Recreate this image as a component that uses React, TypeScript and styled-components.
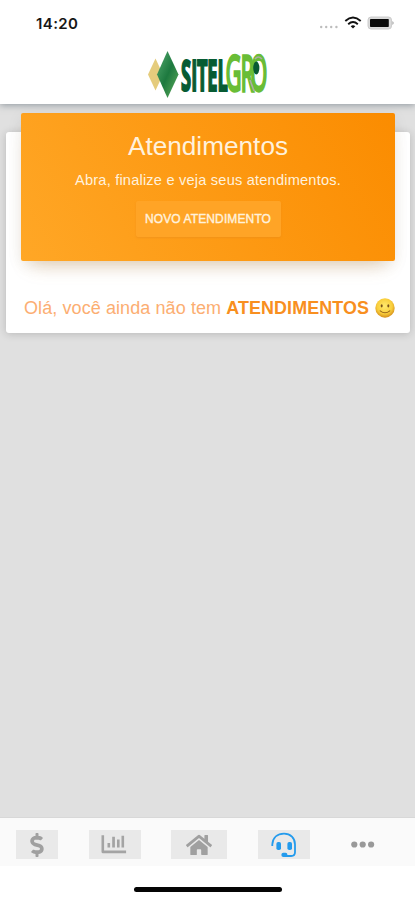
import React from "react";
import styled, { createGlobalStyle } from "styled-components";
import { FaDollarSign, FaHome } from "react-icons/fa";

const GlobalStyle = createGlobalStyle`
  * { box-sizing: border-box; }
  html, body { margin: 0; padding: 0; background: #fff; }
  body { font-family: "Liberation Sans", Arial, sans-serif; overflow: hidden; }
  svg { display: block; overflow: visible; flex: none; }
`;

const Screen = styled.div`
  width: 415px;
  height: 900px;
  display: flex;
  flex-direction: column;
  background: #fff;
`;

const Header = styled.header`
  height: 104px;
  flex: none;
  background: #fff;
  box-shadow: 0 1px 7px rgba(60, 75, 90, 0.5);
  position: relative;
  z-index: 1;
`;

const StatusBar = styled.div`
  height: 46px;
  padding: 0 21px 0 36px;
  display: flex;
  justify-content: space-between;
  align-items: center;
`;

const Clock = styled.span`
  font: 600 15px/18px Inter, sans-serif;
  letter-spacing: 0.4px;
  padding-top: 1px;
  color: #171717;
`;

const StatusIcons = styled.div`
  display: flex;
  align-items: center;
`;

const LogoRow = styled.div`
  display: flex;
  padding: 3px 0 0 146px;
`;

const Content = styled.main`
  flex: 1;
  background: #e0e0e0;
  padding: 28px 5px 0 6px;
`;

const Card = styled.section`
  height: 201px;
  padding: 0 15px;
  background: #fff;
  border-radius: 3px;
  box-shadow: 0 1px 8px rgba(0, 0, 0, 0.18);
`;

const Banner = styled.div`
  height: 148px;
  transform: translateY(-19px);
  display: flex;
  flex-direction: column;
  align-items: center;
  border-radius: 2px;
  color: #fff1dc;
  background: linear-gradient(60deg, #ffa726, #fb8c00);
  box-shadow: 0 12px 18px -10px rgba(190, 130, 50, 0.4), 0 4px 16px rgba(0, 0, 0, 0.07);
`;

const Title = styled.h1`
  margin: 19px 0 0;
  font-size: 26.2px;
  font-weight: 400;
  line-height: 29px;
`;

const Subtitle = styled.p`
  margin: 10px 0 0;
  font-size: 14.6px;
  line-height: 18px;
  letter-spacing: 0.2px;
  white-space: nowrap;
`;

const NewButton = styled.button`
  width: 145px;
  height: 36px;
  margin-top: 12px;
  padding: 0;
  border: 0;
  border-radius: 2px;
  background: #ffa426;
  box-shadow: 0 1px 2px rgba(220, 130, 30, 0.35);
  color: #fff1dc;
  font: 400 12px/36px "Liberation Sans", Arial, sans-serif;
  letter-spacing: 0.12px;
  -webkit-text-stroke: 0.4px #fff1dc;
  white-space: nowrap;
`;

const Message = styled.p`
  margin: 16px -8px 0 3px;
  display: flex;
  align-items: center;
  height: 24px;
  font-size: 18px;
  letter-spacing: 0.09px;
  color: #fcae72;
  white-space: nowrap;
`;

const Strong = styled.strong`
  margin: 0 6px 0 5px;
  font-size: 17.9px;
  letter-spacing: 0.12px;
  color: #f88f20;
`;

const TabBar = styled.nav`
  height: 49px;
  flex: none;
  display: flex;
  align-items: center;
  padding: 5px 0 0 16px;
  background: #fafafa;
  border-top: 1px solid #d8d8d8;
`;

const Tab = styled.button<{ $width: number; $gap?: number; $plain?: boolean }>`
  width: ${(p) => p.$width}px;
  height: 29px;
  margin: 0 ${(p) => p.$gap ?? 0}px 0 0;
  padding: 0;
  flex: none;
  display: flex;
  align-items: center;
  justify-content: center;
  border: 0;
  background: ${(p) => (p.$plain ? "transparent" : "#e9e9e9")};
  color: #a0a0a0;
`;

const HomeArea = styled.footer`
  height: 34px;
  flex: none;
  display: flex;
  justify-content: center;
  align-items: flex-start;
  padding: 21px 0 0 1px;
`;

const HomeIndicator = styled.div`
  width: 148px;
  height: 5px;
  border-radius: 3px;
  background: #050505;
`;

const Signal = () => (
  <svg width="21" height="16" viewBox="0 0 21 16" fill="#bcbcbc">
    <circle cx="1.2" cy="12" r="1.2" />
    <circle cx="6.2" cy="12" r="1.2" />
    <circle cx="11.2" cy="12" r="1.2" />
    <circle cx="16.4" cy="12" r="1.2" />
  </svg>
);

const Wifi = () => (
  <svg width="22" height="16" viewBox="-3 0 22 16" fill="none" stroke="#111" strokeWidth="1.9">
    <path d="M1.3 6Q9 -.8 16.7 6M4.2 9.2Q9 5 13.8 9.2" />
    <path d="M9 13.6l-2.3-2.4Q9 9.4 11.3 11.2z" fill="#111" stroke="none" />
  </svg>
);

const Battery = () => (
  <svg width="31" height="16" viewBox="-4 0 31 16">
    <rect x="1" y="2" width="23.5" height="12" rx="3" fill="#dadada" stroke="#cccccc" />
    <rect x="3" y="4" width="18.8" height="8.1" rx="0.8" fill="#090909" />
    <path d="M25.4 6q2.6 2 0 4z" fill="#a5a5a5" />
  </svg>
);

const Logo = () => (
  <svg width="124" height="52" viewBox="146 49 124 52">
    <defs>
      <linearGradient id="leaf" x1="0" y1="0" x2="1" y2="1">
        <stop offset="0" stopColor="#55ab70" />
        <stop offset="0.5" stopColor="#1d793f" />
        <stop offset="1" stopColor="#62ae5c" />
      </linearGradient>
    </defs>
    <path d="M155.5 58.5L148 74.5l7.5 16 7.5-16z" fill="#e5cc7d" />
    <path d="M167.5 51L157 74.5l10.5 23.5 11-23.5z" fill="url(#leaf)" />
    <text transform="scale(.43 1)" y="91.3" fontFamily="Open Sans, sans-serif">
      <tspan x="421 445 458 482 506" fontSize="42.5" fontWeight="700" fill="#075b33" stroke="#075b33" strokeWidth="2.2">SITEL</tspan>
      <tspan x="525 560 582.5" fontSize="50" fontWeight="400" fill="#69bd36" stroke="#69bd36" strokeWidth="3.4">GRO</tspan>
    </text>
    <path d="M250 80l4 11M255 59q3-4 7 0" fill="none" stroke="#aaaaa4" strokeWidth="1.6" />
    <ellipse cx="256.3" cy="68" rx="3.1" ry="6.5" fill="#075b33" />
  </svg>
);

const Smile = () => (
  <svg width="20" height="20" viewBox="0 0 20 20">
    <defs>
      <radialGradient id="face" cx="0.48" cy="0.4" r="0.6">
        <stop offset="0" stopColor="#ffe96f" />
        <stop offset="0.65" stopColor="#f9ce3b" />
        <stop offset="1" stopColor="#d48d1b" />
      </radialGradient>
    </defs>
    <circle cx="10" cy="10" r="9.7" fill="url(#face)" />
    <ellipse cx="6.7" cy="7.8" rx="1" ry="1.6" fill="#79511a" />
    <ellipse cx="13.3" cy="7.8" rx="1" ry="1.6" fill="#79511a" />
    <path d="M5.2 12.8q4.8 4 9.6 0" fill="none" stroke="#95631b" strokeWidth="1.1" strokeLinecap="round" />
  </svg>
);

const Chart = () => (
  <svg width="26" height="19" viewBox="0.5 0 26 19" fill="#a4a4a4">
    <path d="M0 0.2h2.6v15.3h22v2.8H1.5Q0 18.3 0 16.7z" />
    <path d="M6 7.9h2.6v4.7H6zM10.7 1.7h2.7v10.9h-2.7zM15.5 4.5h2.6v8.1h-2.6zM20 .7h2.6v11.9H20z" />
  </svg>
);

const Headset = () => (
  <svg width="26" height="26" viewBox="0 0 26 26" fill="none" stroke="#249bed">
    <path d="M1.3 14V12.5C1.8 5.5 6.5 1.6 13 1.6S24 6 24 12.5v7.8q0 3.7-3.8 3.7H14" strokeWidth="1.8" />
    <rect x="5.4" y="10" width="4.6" height="8" rx="1.8" fill="#249bed" stroke="none" />
    <rect x="16.4" y="10" width="4.6" height="8" rx="1.8" fill="#249bed" stroke="none" />
    <rect x="10.4" y="20.8" width="6" height="4.2" rx="1.9" fill="#249bed" stroke="none" />
  </svg>
);

const More = () => (
  <svg width="24" height="8" viewBox="0 0 24 8" fill="#999">
    <circle cx="3.3" cy="3.5" r="3.1" />
    <circle cx="11.7" cy="3.5" r="3.1" />
    <circle cx="20.1" cy="3.5" r="3.1" />
  </svg>
);

export default function App() {
  return (
    <>
      <GlobalStyle />
      <Screen>
        <Header>
          <StatusBar>
            <Clock>14:20</Clock>
            <StatusIcons><Signal /><Wifi /><Battery /></StatusIcons>
          </StatusBar>
          <LogoRow><Logo /></LogoRow>
        </Header>
        <Content>
          <Card>
            <Banner>
              <Title>Atendimentos</Title>
              <Subtitle>Abra, finalize e veja seus atendimentos.</Subtitle>
              <NewButton>NOVO ATENDIMENTO</NewButton>
            </Banner>
            <Message>
              <span>Olá, você ainda não tem</span>
              <Strong>ATENDIMENTOS</Strong>
              <Smile />
            </Message>
          </Card>
        </Content>
        <TabBar>
          <Tab $width={42} $gap={31}><FaDollarSign size={24} /></Tab>
          <Tab $width={52} $gap={30}><Chart /></Tab>
          <Tab $width={56} $gap={31}><FaHome size={26} /></Tab>
          <Tab $width={52} $gap={27}><Headset /></Tab>
          <Tab $width={52} $plain><More /></Tab>
        </TabBar>
        <HomeArea><HomeIndicator /></HomeArea>
      </Screen>
    </>
  );
}
